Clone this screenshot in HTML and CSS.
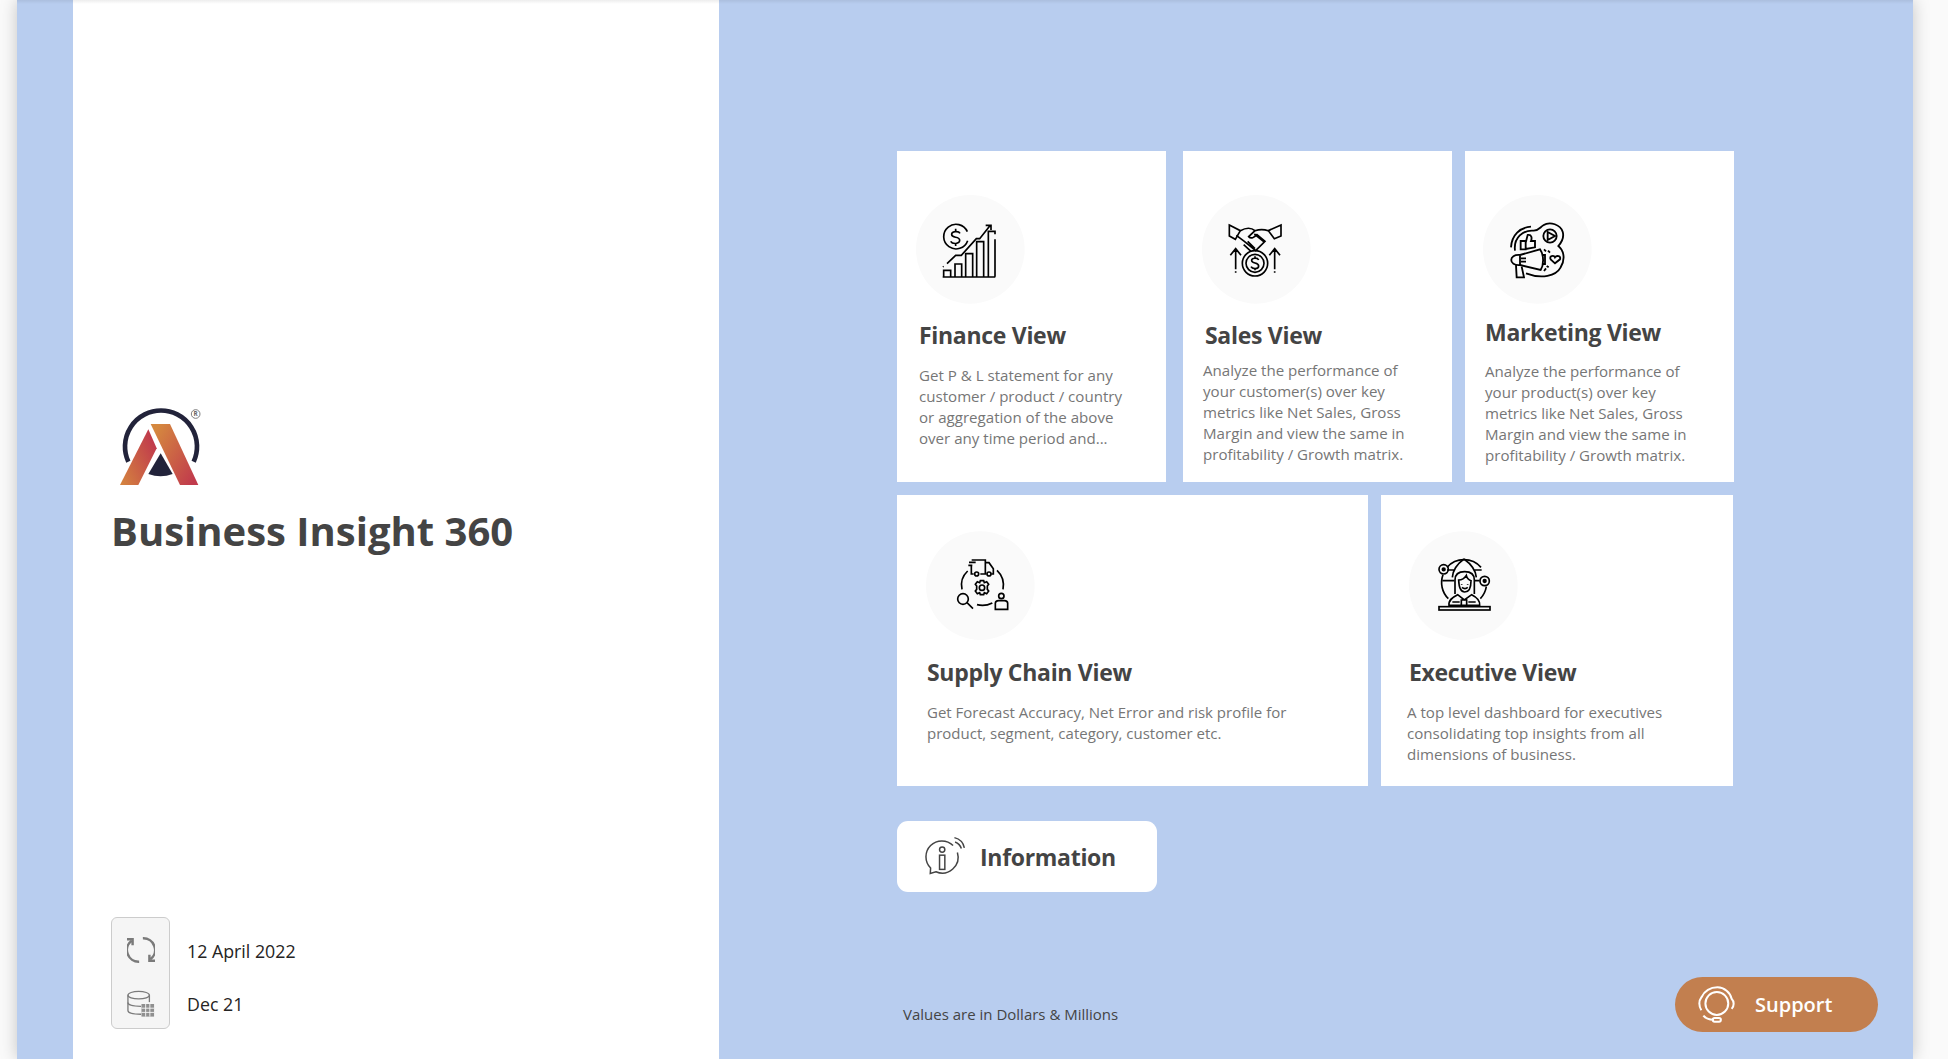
FILE: index.html
```html
<!DOCTYPE html>
<html lang="en">
<head>
<meta charset="utf-8">
<title>Business Insight 360</title>
<link rel="stylesheet" href="styles.css">
</head>
<body>
<div class="canvas">
  <aside class="brand">
    <svg class="logo" viewBox="0 0 300 300" aria-label="Company logo">
      <defs>
        <linearGradient id="legL" x1="0" y1="1" x2="1" y2="0.3"><stop offset="0" stop-color="#d5863f"/><stop offset="1" stop-color="#c0394c"/></linearGradient>
        <linearGradient id="legR" x1="0.1" y1="0.1" x2="1" y2="0.8"><stop offset="0" stop-color="#d5883f"/><stop offset="1" stop-color="#c13b4c"/></linearGradient>
      </defs>
      <path d="M55 185A108 108 0 1 1 251 185" fill="none" stroke="#22233a" stroke-width="14"/>
      <path d="M115 88L140 145L85 255H30Z" fill="url(#legL)"/>
      <path d="M122 72H180L265 255H210Z" fill="url(#legR)"/>
      <path d="M152 160L188 222Q152 236 115 222Z" fill="#22233a"/>
      <circle cx="257" cy="42" r="13" fill="none" stroke="#666" stroke-width="2.500"/>
      <text x="257" y="49" class="logo-r">R</text>
    </svg>
    <h1 class="brand-title">Business Insight 360</h1>
    <div class="status">
      <div class="status-icons">
        <svg class="status-icon" viewBox="0 0 30 30" fill="none" stroke="#7a7a7a" stroke-width="2.600">
          <path d="M13 27.500A12.500 12.500 0 0 1 5 5"/><path d="M0 3.500H6V10"/>
          <path d="M17 2.500A12.500 12.500 0 0 1 25 25"/><path d="M30 26.500H24V20"/>
        </svg>
        <svg class="status-icon" viewBox="0 0 30 30" fill="none" stroke="#7a7a7a" stroke-width="1.400">
          <ellipse cx="12.500" cy="5.500" rx="11.500" ry="4"/>
          <path d="M1 5.500V22C1 24.500 7 26 15 26"/>
          <path d="M24 5.500V13"/><path d="M1 13.500C1 16 7 17.500 15 17.500"/>
          <rect x="15.500" y="15" width="13.500" height="13.500" fill="#8f8f8f" stroke="none"/>
          <path d="M15.500 19.500H29M15.500 24H29M20 15V28.500M24.500 15V28.500" stroke="#f5f5f5" stroke-width="1"/>
        </svg>
      </div>
      <div class="status-text">
        <span>12 April 2022</span>
        <span>Dec 21</span>
      </div>
    </div>
  </aside>

  <main class="content">
    <div class="row row-top">
      <article class="card card-finance">
        <svg class="disc" viewBox="77 165 327 327" fill="none" stroke="#000" stroke-width="5">
          <circle class="disc-bg" cx="240" cy="328" r="163"/>
          <path d="M231 275A37 37 0 1 0 232 302"/>
          <path d="M209 280C205 272 183 273 184 284C185 296 208 287 208 301C208 313 186 313 181 304M196 266V272M196 312V318"/>
          <path d="M157 411H315M160 410V391H181V410M194 410V372H214V410M226 410V341H247V410M259 410V305H280V410M294 410V274H314V283M314 298V410"/>
          <path d="M158 381L160 379M170 371L196 346H213L258 296H268L300 256M286 256H302V270"/>
        </svg>
        <h2 class="card-title">Finance View</h2>
        <p class="card-text">Get P &amp; L statement for any<br>customer / product / country<br>or aggregation of the above<br>over any time period and...</p>
      </article>
      <article class="card card-sales">
        <svg class="disc" viewBox="65 165 327 327" fill="none" stroke="#000" stroke-width="5">
          <circle class="disc-bg" cx="228" cy="328" r="163"/>
          <path d="M147 255L180 272L165 298L147 288ZM302 255V288L282 296L264 272Z"/>
          <path d="M180 272C198 262 212 262 224 272L205 290C212 298 222 292 230 284L254 304L226 332L192 304L168 286M264 272C246 266 236 268 224 272M222 282L252 306M190 314L212 334M202 304L224 326"/>
          <circle cx="224" cy="370" r="38"/><circle cx="224" cy="370" r="27"/>
          <path d="M235 360C231 352 213 353 214 362C215 372 235 366 235 378C235 388 216 388 212 380M224 349V355M224 385V391"/>
          <path d="M166 388V328M150 346L166 326L182 346M166 394V398M283 388V328M267 346L283 326L299 346M283 394V398"/>
        </svg>
        <h2 class="card-title">Sales View</h2>
        <p class="card-text">Analyze the performance of<br>your customer(s) over key<br>metrics like Net Sales, Gross<br>Margin and view the same in<br>profitability / Growth matrix.</p>
      </article>
      <article class="card card-marketing">
        <svg class="disc" viewBox="39 15 327 327" fill="none" stroke="#000" stroke-width="5.500">
          <circle class="disc-bg" cx="202" cy="178" r="163"/>
          <path d="M123 172C125 135 150 112 183 110"/>
          <path d="M135 182C130 142 160 120 190 122C205 123 210 112 220 106C240 92 272 105 278 125C284 145 272 160 265 168C280 180 288 205 272 232C258 258 215 268 168 250"/>
          <circle cx="240" cy="138" r="20"/><path d="M233 126L255 138L233 150Z"/>
          <path d="M152 153H167V178H152ZM167 158L173 135C186 133 186 145 183 153H195V172L167 177"/>
          <path d="M150 195L210 178C222 195 222 225 212 240L150 225ZM150 195C115 192 115 228 150 225M138 226L140 262H162L155 230M153 205H168M153 215H168M215 195H225V222H216"/>
          <path d="M255 220L242 208C236 197 252 195 255 202C260 195 274 198 270 208Z"/>
          <path d="M222 178L228 184M234 182L240 188M222 243L228 235M236 232L230 228"/>
        </svg>
        <h2 class="card-title">Marketing View</h2>
        <p class="card-text">Analyze the performance of<br>your product(s) over key<br>metrics like Net Sales, Gross<br>Margin and view the same in<br>profitability / Growth matrix.</p>
      </article>
    </div>
    <div class="row row-bottom">
      <article class="card card-supply">
        <svg class="disc" viewBox="107 123 327 327" fill="none" stroke="#000" stroke-width="5">
          <circle class="disc-bg" cx="270" cy="287" r="163"/>
          <path d="M244 210H285V252H270M250 252H243V226M236 217H256M234 226H246M285 218H296L309 236V252H303M285 252H288"/>
          <circle cx="259" cy="252" r="6"/><circle cx="296" cy="252" r="6"/>
          <path d="M232 243C216 258 211 280 215 298M320 241C336 256 342 276 338 298M260 344C274 348 292 346 306 339"/>
          <circle cx="275" cy="293" r="8"/>
          <path d="M270 272H280L282 278L289 275L295 283L291 288L291 298L295 303L289 311L282 308L280 314H270L268 308L261 311L255 303L259 298L259 288L255 283L261 275L268 278Z"/>
          <circle cx="218" cy="327" r="16"/><path d="M230 338L248 356"/>
          <circle cx="333" cy="318" r="8"/><path d="M315 358V340Q315 332 325 332H342Q352 332 352 340V358Z"/>
        </svg>
        <h2 class="card-title">Supply Chain View</h2>
        <p class="card-text">Get Forecast Accuracy, Net Error and risk profile for<br>product, segment, category, customer etc.</p>
      </article>
      <article class="card card-executive">
        <svg class="disc" viewBox="118 123 327 327" fill="none" stroke="#000" stroke-width="5">
          <circle class="disc-bg" cx="281" cy="287" r="163"/>
          <path d="M232 232A68 68 0 0 1 334 232M220 254A68 68 0 0 0 236 326M350 290A68 68 0 0 1 332 326"/>
          <path d="M283 207C262 222 250 240 248 262M283 207C304 222 318 240 320 262M232 240H256M312 240H336M218 272H254M316 272H330"/>
          <circle cx="222" cy="238" r="14"/><circle cx="222" cy="238" r="4" fill="#000"/>
          <circle cx="345" cy="273" r="14"/><circle cx="345" cy="273" r="4" fill="#000"/>
          <path d="M256 312V270C256 252 268 245 285 245C302 245 314 252 314 270V312"/>
          <path d="M267 270C268 298 274 306 285 306C298 306 304 295 304 272C298 270 292 264 290 256C284 266 276 270 267 270ZM276 282V284M294 282V284M277 292C282 297 290 297 294 292"/>
          <path d="M238 346C236 330 248 322 264 314L284 330L306 314C322 322 332 330 330 346ZM275 330H291V346H275ZM248 336H270M296 336H318"/>
          <rect x="208" y="350" width="153" height="10"/>
        </svg>
        <h2 class="card-title">Executive View</h2>
        <p class="card-text">A top level dashboard for executives<br>consolidating top insights from all<br>dimensions of business.</p>
      </article>
    </div>
    <button class="info-btn" type="button">
      <svg class="info-icon" viewBox="130 108 124 124" fill="none" stroke="#444" stroke-width="4.500">
        <path d="M218 137A48 48 0 0 0 150 205L149 221L166 216A48 48 0 0 0 231 158"/>
        <circle cx="185" cy="149" r="8"/>
        <rect x="177" y="166" width="16" height="43"/>
        <path d="M224 126C234 130 240 136 243 146M222 113C238 117 249 128 252 144"/>
      </svg>
      <span class="info-label">Information</span>
    </button>
    <div class="footer">
      <p class="note">Values are in Dollars &amp; Millions</p>
      <button class="support-btn" type="button">
        <svg class="support-icon" viewBox="146 80 110 110" fill="none" stroke="#fff" stroke-width="6">
          <circle cx="202" cy="132" r="34"/>
          <path d="M156 152C148 140 148 124 156 114C166 94 180 84 204 84C224 84 242 100 246 118C254 126 254 140 246 148"/>
          <path d="M162 168C170 178 180 180 192 180"/>
          <rect x="190" y="175" width="24" height="11" rx="5.500"/>
        </svg>
        <span>Support</span>
      </button>
    </div>
  </main>
  <div class="top-shade"></div>
</div>
</body>
</html>
```
FILE: styles.css
```css
* { box-sizing: border-box; }
html, body { margin: 0; height: 100%; }
body {
  background: #fafafa;
  overflow: hidden;
  font-family: "Open Sans", "Noto Sans", sans-serif;
}
h1, h2, p { margin: 0; }

.canvas {
  position: relative;
  display: flex;
  width: 1896px;
  height: 1059px;
  margin-left: 17px;
  padding-left: 56px;
  background: #b8cdef;
  box-shadow: 0 0 16px rgba(0, 0, 0, .22);
}
.top-shade {
  position: absolute;
  inset: 0 0 auto 0;
  height: 4px;
  background: linear-gradient(rgba(0, 0, 0, .07), rgba(0, 0, 0, 0));
}

/* left panel */
.brand {
  display: flex;
  flex-direction: column;
  flex: 0 0 646px;
  padding: 400px 0 30px 38px;
  background: #fff;
}
.logo { display: block; width: 100px; height: 100px; margin-left: -1px; }
.logo-r { font: 700 19px "Open Sans", sans-serif; fill: #666; text-anchor: middle; }
.brand-title {
  margin-top: 4px;
  font-size: 40px;
  line-height: 54px;
  font-weight: 700;
  color: #444;
  white-space: nowrap;
}
.status { display: flex; margin-top: auto; }
.status-icons {
  display: flex;
  flex-direction: column;
  align-items: center;
  gap: 26px;
  width: 59px;
  height: 112px;
  padding-top: 18px;
  background: #f5f5f5;
  border: 1px solid #ccc;
  border-radius: 6px;
}
.status-icon { display: block; width: 28px; height: 28px; flex: none; }
.status-text {
  display: flex;
  flex-direction: column;
  gap: 29px;
  margin-left: 17px;
  padding-top: 22px;
  font-size: 17.800px;
  line-height: 24px;
  color: #252423;
}

/* right panel */
.content {
  display: flex;
  flex-direction: column;
  flex: 1;
  padding: 151px 35px 0 178px;
}
.row { display: flex; }
.row-top { height: 331px; gap: 17px; }
.row-bottom { height: 291px; margin-top: 13px; gap: 13px; }
.card { background: #fff; padding-top: 44px; }
.row-bottom .card { padding-top: 36px; }
.card-finance { width: 269px; padding-left: 19px; }
.card-sales { width: 269px; padding-left: 19px; }
.card-marketing { width: 269px; margin-left: -4px; padding-left: 18px; }
.card-supply { width: 471px; padding-left: 29px; }
.card-executive { width: 352px; padding-left: 28px; }

.disc { display: block; width: 109px; height: 109px; }
.disc-bg { fill: #fafafa; stroke: none; }
.card-title {
  margin: 15px 0 0 3px;
  font-size: 23px;
  line-height: 32px;
  font-weight: 700;
  letter-spacing: -.3px;
  color: #444;
  white-space: nowrap;
}
.card-text {
  margin: 14px 0 0 3px;
  font-size: 15.100px;
  line-height: 21px;
  color: #767676;
  white-space: nowrap;
}
.card-sales .card-title { margin-top: 15px; }
.card-sales .card-text { margin-top: 9px; margin-left: 1px; }
.card-marketing .card-title { margin-top: 12px; margin-left: 2px; }
.card-marketing .card-text { margin-top: 13px; margin-left: 2px; }
.card-supply .card-title { margin-top: 16px; margin-left: 1px; }
.card-supply .card-text { margin-top: 14px; margin-left: 1px; font-size: 15px; }
.card-executive .card-title { margin-top: 16px; margin-left: 0; }
.card-executive .card-text { margin-top: 14px; margin-left: -2px; }

.info-btn {
  display: flex;
  align-items: center;
  width: 260px;
  height: 71px;
  margin-top: 35px;
  padding: 0 0 0 27px;
  background: #fff;
  border: 0;
  border-radius: 11px;
  font-family: inherit;
}
.info-icon { display: block; width: 41px; height: 41px; flex: none; }
.info-label {
  margin-left: 15px;
  font-size: 23px;
  font-weight: 700;
  letter-spacing: -.3px;
  color: #444;
}
.footer {
  display: flex;
  justify-content: space-between;
  align-items: flex-end;
  margin-top: 85px;
}
.note {
  margin: 0 0 8px 6px;
  font-size: 15px;
  line-height: 20px;
  color: #444;
}
.support-btn {
  display: flex;
  align-items: center;
  width: 203px;
  height: 55px;
  padding: 0 0 0 23px;
  background: #c27f4f;
  border: 0;
  border-radius: 28px;
  font-family: inherit;
  font-size: 20px;
  font-weight: 600;
  color: #fff;
}
.support-icon { display: block; width: 37px; height: 37px; flex: none; margin-right: 20px; }
```
